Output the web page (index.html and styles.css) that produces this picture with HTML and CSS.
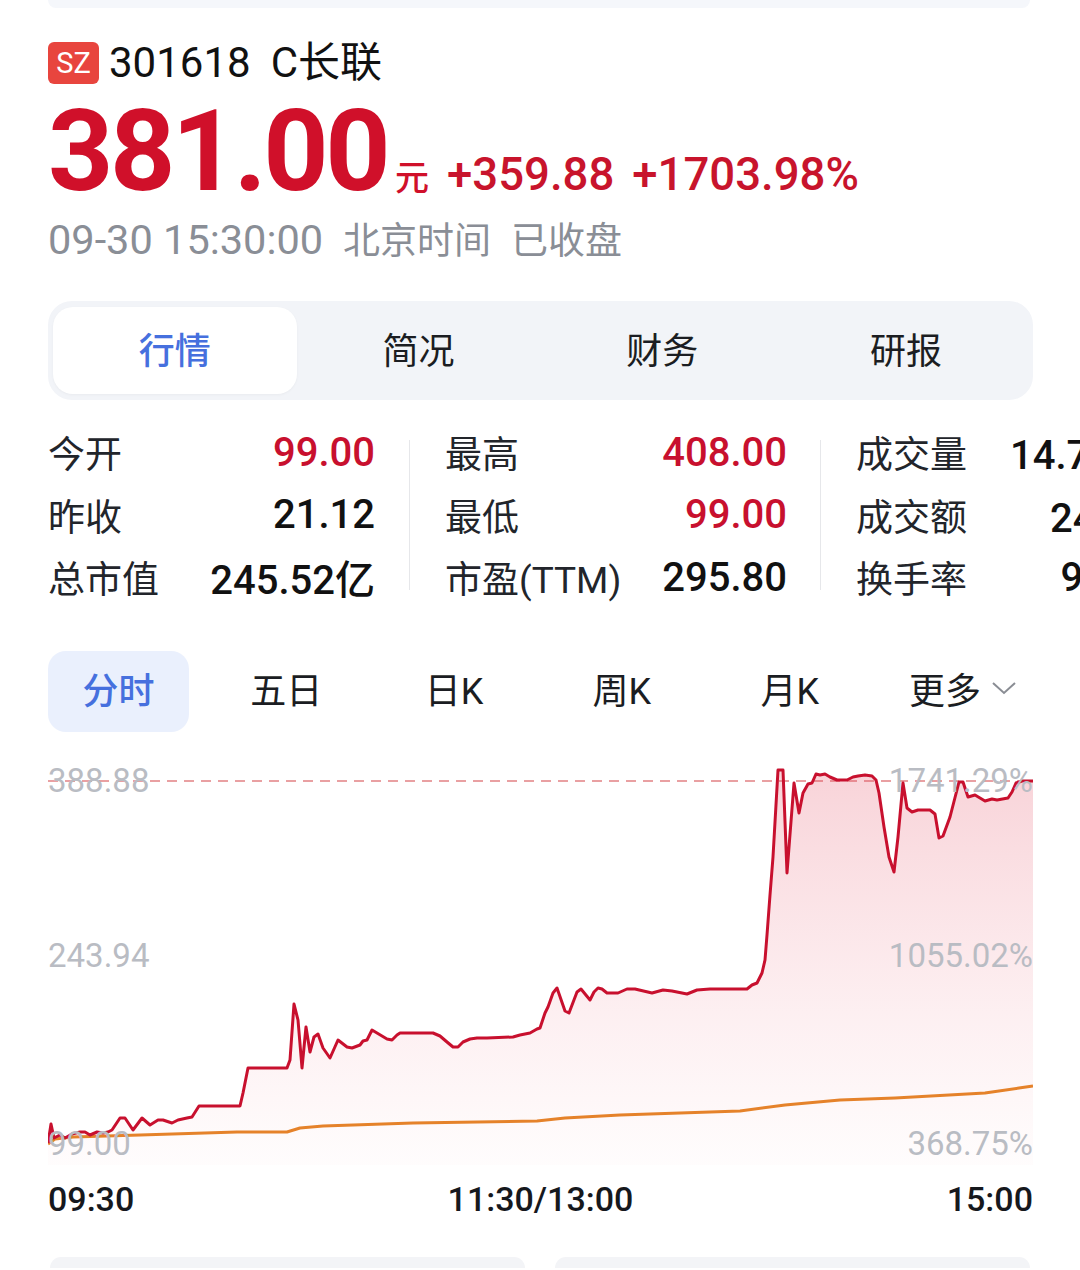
FILE: index.html
```html
<!DOCTYPE html>
<html lang="zh-CN">

<head>
    <meta charset="UTF-8">
    <meta name="viewport" content="width=device-width, initial-scale=1.0">
    <title>C长联 行情</title>
    <link rel="stylesheet" href="styles.css">
</head>

<body>
    <div class="prev-card"></div>

    <main class="page">
        <section class="quote">
            <div class="title">
                <span class="badge">SZ</span>
                <span class="code">301618</span>
                <span class="name">C长联</span>
            </div>
            <div class="price-row">
                <span class="price">381.00</span>
                <span class="unit">元</span>
                <span class="change">+359.88</span>
                <span class="change">+1703.98%</span>
            </div>
            <div class="time">
                <span class="stamp">09-30 15:30:00</span>
                <span class="gap">北京时间</span>
                <span class="gap">已收盘</span>
            </div>
        </section>

        <nav class="tabs">
            <a class="tab active">行情</a>
            <a class="tab">简况</a>
            <a class="tab">财务</a>
            <a class="tab">研报</a>
        </nav>

        <section class="stats">
            <div class="stat-col col-1">
                <div class="stat"><span>今开</span><b class="up">99.00</b></div>
                <div class="stat"><span>昨收</span><b>21.12</b></div>
                <div class="stat"><span>总市值</span><b>245.52亿</b></div>
            </div>
            <div class="divider"></div>
            <div class="stat-col col-2">
                <div class="stat"><span>最高</span><b class="up">408.00</b></div>
                <div class="stat"><span>最低</span><b class="up">99.00</b></div>
                <div class="stat"><span>市盈(TTM)</span><b>295.80</b></div>
            </div>
            <div class="divider"></div>
            <div class="stat-col col-3">
                <div class="stat"><span>成交量</span><b>14.73万手</b></div>
                <div class="stat"><span>成交额</span><b>24.31亿</b></div>
                <div class="stat"><span>换手率</span><b>91.35%</b></div>
            </div>
        </section>

        <nav class="periods">
            <a class="period active">分时</a>
            <a class="period">五日</a>
            <a class="period">日K</a>
            <a class="period">周K</a>
            <a class="period">月K</a>
            <a class="period more">更多
                <svg class="chevron" viewBox="0 0 26 14" width="26" height="14">
                    <polyline points="2,2 13,12 24,2" fill="none" stroke="#8a8d94" stroke-width="2" />
                </svg>
            </a>
        </nav>

        <section class="chart">
            <svg class="chart-svg" viewBox="48 760 985 410" width="985" height="410">
                <defs>
                    <linearGradient id="area" x1="0" y1="0" x2="0" y2="1">
                        <stop offset="0" stop-color="#e3485e" stop-opacity="0.24" />
                        <stop offset="1" stop-color="#f07a8a" stop-opacity="0.02" />
                    </linearGradient>
                </defs>
                <line x1="48" y1="781" x2="1033" y2="781" stroke="#e9a0a2" stroke-width="2" stroke-dasharray="10 7" />
                <path fill="url(#area)" d="M48,1143 L51,1124 54,1138 60,1135 65,1138 72,1134 80,1132 85,1132 90,1135 97,1132 103,1133 108,1132 112,1130 120,1118 125,1118 133,1130 142,1118 150,1125 158,1120 163,1120 172,1123 178,1120 187,1118 192,1117 199,1106 240,1106 243,1093 248,1068 287,1068 290,1060 294,1004 298,1020 302,1068 306,1027 310,1052 314,1037 318,1034 323,1048 330,1058 338,1040 347,1047 352,1048 360,1045 363,1041 367,1040 372,1030 377,1033 382,1036 387,1039 392,1040 397,1035 400,1033 433,1033 440,1036 447,1042 453,1047 458,1047 463,1042 470,1039 477,1038 487,1038 513,1037 520,1035 530,1033 537,1029 540,1028 545,1013 548,1007 553,993 557,988 565,1011 569,1013 577,992 581,989 590,1000 594,992 598,988 602,989 607,993 618,993 627,989 635,989 652,993 663,990 672,991 677,992 687,994 697,990 710,989 747,989 752,985 757,983 762,973 765,960 767,935 770,895 773,857 778,770 783,770 787,873 794,783 799,813 803,793 808,784 812,783 816,774 820,775 825,774 830,777 837,780 847,780 853,777 858,776 865,775 872,776 876,780 879,793 884,827 889,857 894,872 898,837 903,783 907,808 912,812 918,810 930,810 935,814 939,838 943,836 950,817 959,782 963,782 968,797 975,795 980,798 985,801 992,799 997,800 1008,798 1012,792 1016,783 1022,781 1033,781 L1033,1165 L48,1165 Z" />
                <polyline fill="none" stroke="#e5822a" stroke-width="3" stroke-linejoin="round" points="48,1144 55,1139 73,1137 140,1135 237,1132 287,1132 300,1128 323,1126 413,1123 537,1121 565,1118 620,1115 740,1111 785,1105 840,1100 895,1098 985,1093 1019,1088 1033,1086" />
                <polyline fill="none" stroke="#c8102e" stroke-width="3" stroke-linejoin="round" points="48,1143 51,1124 54,1138 60,1135 65,1138 72,1134 80,1132 85,1132 90,1135 97,1132 103,1133 108,1132 112,1130 120,1118 125,1118 133,1130 142,1118 150,1125 158,1120 163,1120 172,1123 178,1120 187,1118 192,1117 199,1106 240,1106 243,1093 248,1068 287,1068 290,1060 294,1004 298,1020 302,1068 306,1027 310,1052 314,1037 318,1034 323,1048 330,1058 338,1040 347,1047 352,1048 360,1045 363,1041 367,1040 372,1030 377,1033 382,1036 387,1039 392,1040 397,1035 400,1033 433,1033 440,1036 447,1042 453,1047 458,1047 463,1042 470,1039 477,1038 487,1038 513,1037 520,1035 530,1033 537,1029 540,1028 545,1013 548,1007 553,993 557,988 565,1011 569,1013 577,992 581,989 590,1000 594,992 598,988 602,989 607,993 618,993 627,989 635,989 652,993 663,990 672,991 677,992 687,994 697,990 710,989 747,989 752,985 757,983 762,973 765,960 767,935 770,895 773,857 778,770 783,770 787,873 794,783 799,813 803,793 808,784 812,783 816,774 820,775 825,774 830,777 837,780 847,780 853,777 858,776 865,775 872,776 876,780 879,793 884,827 889,857 894,872 898,837 903,783 907,808 912,812 918,810 930,810 935,814 939,838 943,836 950,817 959,782 963,782 968,797 975,795 980,798 985,801 992,799 997,800 1008,798 1012,792 1016,783 1022,781 1033,781" />
                <text class="axis-label" x="48" y="792">388.88</text>
                <text class="axis-label" x="48" y="967">243.94</text>
                <text class="axis-label" x="48" y="1155">99.00</text>
                <text class="axis-label" x="1033" y="792" text-anchor="end">1741.29%</text>
                <text class="axis-label" x="1033" y="967" text-anchor="end">1055.02%</text>
                <text class="axis-label" x="1033" y="1155" text-anchor="end">368.75%</text>
            </svg>
            <div class="times">
                <span>09:30</span>
                <span>11:30/13:00</span>
                <span>15:00</span>
            </div>
        </section>

        <div class="cards">
            <div class="card"></div>
            <div class="card"></div>
        </div>
    </main>
</body>

</html>
```

FILE: styles.css
```css
body {
    margin: 0;
    padding: 0;
    background-color: #fff;
    color: #16181d;
    font-family: Roboto, "Noto Sans CJK SC", sans-serif;
    overflow: hidden;
}

.prev-card {
    height: 8px;
    margin: 0 50px 0 48px;
    background-color: #f5f7fb;
    border-radius: 0 0 24px 24px;
}

.page {
    padding: 0 47px 0 48px;
}

/* header */

.title {
    display: flex;
    align-items: center;
    height: 50px;
    margin-top: 30px;
    font-size: 42px;
    line-height: 1;
    color: #111;
}

.badge {
    display: flex;
    align-items: center;
    justify-content: center;
    width: 51px;
    height: 42px;
    margin-right: 10px;
    background-color: #e8453e;
    color: #fff;
    border-radius: 6px;
    font-size: 29px;
}

.name {
    margin-left: 20px;
}

.price-row {
    display: flex;
    align-items: baseline;
    height: 114px;
    margin-top: 6px;
    color: #d0102a;
    line-height: 1;
}

.price {
    font-size: 114px;
    font-weight: 700;
    letter-spacing: -3.5px;
}

.unit {
    margin-left: 8px;
    font-size: 34px;
    font-weight: 500;
}

.change {
    margin-left: 18px;
    font-size: 45.5px;
    font-weight: 500;
    color: #c8142c;
}

.time {
    display: flex;
    align-items: baseline;
    margin-top: 8px;
    line-height: 48px;
    font-size: 37px;
    color: #8a8e96;
}

.time .stamp {
    font-size: 41.5px;
}

.time .gap {
    margin-left: 20px;
}

/* tabs */

.tabs {
    display: flex;
    height: 99px;
    padding: 6px 5px;
    margin-top: 35px;
    box-sizing: border-box;
    background-color: #f2f4f8;
    border-radius: 24px;
}

.tab {
    flex: 1;
    display: flex;
    align-items: center;
    justify-content: center;
    padding-bottom: 5px;
    font-size: 36px;
    color: #1b1d22;
    border-radius: 20px;
}

.tab.active {
    background-color: #fff;
    color: #4670de;
    font-weight: 500;
    box-shadow: 0 1px 3px rgba(0, 0, 0, 0.04);
}

/* stats */

.stats {
    display: flex;
    align-items: center;
    margin-top: 21px;
    margin-right: -47px;
    overflow: hidden;
}

.stat-col {
    flex: none;
}

.col-1 {
    width: 327px;
    padding-right: 34px;
}

.col-2 {
    width: 342px;
    padding: 0 33px 0 35px;
}

.col-3 {
    width: 336px;
    padding-left: 35px;
}

.divider {
    flex: none;
    width: 1px;
    height: 150px;
    background-color: #e6e7ea;
}

.stat {
    display: flex;
    justify-content: space-between;
    align-items: center;
    height: 62.5px;
    white-space: nowrap;
}

.stat span {
    font-size: 37px;
    color: #22252b;
}

.stat b {
    font-size: 40px;
    font-weight: 500;
    color: #111;
}

.stat b.up {
    color: #c8102e;
}

/* periods */

.periods {
    display: flex;
    justify-content: space-between;
    height: 81px;
    margin-top: 42px;
}

.period {
    display: flex;
    align-items: center;
    justify-content: center;
    width: 141px;
    padding-bottom: 6px;
    box-sizing: border-box;
    font-size: 36px;
    color: #1b1d22;
    border-radius: 18px;
}

.period.active {
    background-color: #eaf0fd;
    color: #4670de;
    font-weight: 500;
}

.period.more {
    width: 130px;
    justify-content: flex-end;
    margin-right: 16px;
}

.chevron {
    margin-left: 10px;
}

/* chart */

.chart {
    margin-top: 28px;
}

.chart-svg {
    display: block;
}

.axis-label {
    font-family: Roboto, sans-serif;
    font-size: 33px;
    fill: #b9bcc3;
}

.times {
    display: flex;
    justify-content: space-between;
    margin-top: 9px;
    line-height: 40px;
    font-size: 34px;
    font-weight: 500;
    color: #16181d;
}

.cards {
    display: flex;
    gap: 30px;
    margin-top: 38px;
    padding: 0 3px 0 2px;
}

.card {
    flex: 1;
    height: 11px;
    background-color: #f3f4f7;
    border-radius: 20px 20px 0 0;
}
```
